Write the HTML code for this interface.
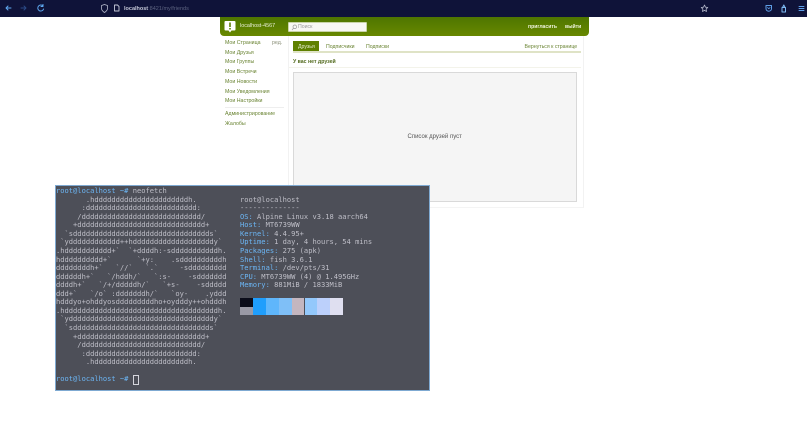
<!DOCTYPE html>
<html lang="ru">
<head>
<meta charset="utf-8">
<title>localhost</title>
<style>
html,body{margin:0;padding:0;background:#fff;width:807px;height:422px;overflow:hidden;font-family:"Liberation Sans","Noto Sans CJK SC",sans-serif}
#all{position:absolute;left:0;top:0;width:807px;height:422px;filter:blur(.35px)}
.a{position:absolute;white-space:pre;line-height:1}
#bar{position:absolute;left:0;top:0;width:807px;height:17px;background:#0f1339}
#hd{position:absolute;left:220px;top:17px;width:369px;height:19px;background:linear-gradient(#4e7600,#688800);border-radius:0 0 4px 4px}
#panel{position:absolute;left:288px;top:36px;width:294px;height:171px;background:#fff;border-right:1px solid #f2f2f2;border-left:1px solid #f2f2f2;border-bottom:1px solid #f4f4f4}
.m{position:absolute;left:225px;font-size:5.25px;color:#6a8433;line-height:1;white-space:pre}
.t{position:absolute;font-size:5.2px;color:#6a8433;line-height:1;white-space:pre}
#term{position:absolute;left:55px;top:185px;width:373px;height:204px;background:#4d4f58;border:1px solid #7faad2;box-sizing:content-box}
#term pre{position:absolute;margin:0;font-family:"DejaVu Sans Mono","Liberation Mono",monospace;font-size:7.09px;line-height:8.56px;color:#bfbfc8;white-space:pre}
.b{color:#6cb6f5}
.sw{position:absolute;width:12.9px;height:17px}
</style>
</head>
<body>
<div id="all">
<div id="bar">
<svg width="807" height="17" style="position:absolute;left:0;top:0" fill="none" stroke-linecap="round" stroke-linejoin="round">
<path d="M6 8h5M6 8l2-2M6 8l2 2" stroke="#5fa8f0" stroke-width="1"/>
<path d="M21 8h5M26 8l-2-2M26 8l-2 2" stroke="#2b4a86" stroke-width="1"/>
<path d="M43 6a3 3 0 1 0 0.6 3M43 4.500v2h-2" stroke="#5fa8f0" stroke-width="1"/>
<path d="M101.500 5.500l3-1 3 1v3c0 2-1.500 3-3 4-1.500-1-3-2-3-4z" stroke="#b5b9cc" stroke-width=".8"/>
<path d="M114.500 5h3l1.500 1.500V11h-4.500z" stroke="#c5c8d8" stroke-width=".9"/>
<path d="M704.500 5l1 2.200 2.300.3-1.700 1.600.4 2.400-2-1.200-2 1.200.4-2.400-1.700-1.600 2.300-.3z" stroke="#b5b9cc" stroke-width=".8"/>
<path d="M766 5.500h5.500v3c0 1.600-1.200 2.700-2.700 2.700s-2.800-1.100-2.800-2.700z" stroke="#5f9fe8" stroke-width="1"/>
<path d="M767.500 7.500l1.300 1.200 1.300-1.200" stroke="#5f9fe8" stroke-width=".8"/>
<path d="M782 7.500h3.500V12H782zM782.500 7.500l1.300-2.500 1.300 2.500" stroke="#7db9f2" stroke-width="1"/>
<path d="M799 6.500h5M799 8.500h5M799 10.500h5" stroke="#5f9fe8" stroke-width=".9"/>
</svg>
<div class="a" style="left:124px;top:6.500px;font-size:5.500px;color:#c3c6d6;font-weight:bold">localhost<span style="color:#5d6380;font-weight:normal">:8421/my/friends</span></div>
</div>

<div id="hd">
<svg width="13" height="15" style="position:absolute;left:4px;top:3px"><path d="M1.500 1h9a1 1 0 0 1 1 1v7.500a1 1 0 0 1-1 1H7.500L6 12.500 4.500 10.500h-3a1 1 0 0 1-1-1V2a1 1 0 0 1 1-1z" fill="#fff"/><rect x="5.200" y="2.500" width="1.600" height="4.500" fill="#5d7f05"/><rect x="5.200" y="8" width="1.600" height="1.500" fill="#5d7f05"/></svg>
<div class="a" style="left:20px;top:7.300px;font-size:5.400px;color:#e8efd8">localhost-4567</div>
<div style="position:absolute;left:68px;top:5px;width:79px;height:10px;background:#f8f8f4;border:.5px solid #c9d4a8;border-radius:1px;box-sizing:border-box"></div>
<svg width="7" height="7" style="position:absolute;left:71px;top:7px" fill="none" stroke="#999" stroke-width=".7"><circle cx="3.800" cy="2.800" r="1.800"/><path d="M2.500 4.200L1 6"/></svg>
<div class="a" style="left:78px;top:8px;font-size:5.200px;color:#9a9a9a">Поиск</div>
<div class="a" style="left:308px;top:7.500px;font-size:5.100px;font-weight:bold;color:#eef3dc">пригласить</div>
<div class="a" style="left:345px;top:7.500px;font-size:5.100px;font-weight:bold;color:#eef3dc">выйти</div>
</div>

<div class="m" style="top:41px">Мои Страница</div>
<div class="m" style="top:41px;left:272px;color:#8a8f78">ред.</div>
<div class="m" style="top:50.500px">Мои Друзья</div>
<div class="m" style="top:60px">Мои Группы</div>
<div class="m" style="top:70px">Мои Встречи</div>
<div class="m" style="top:79.500px">Мои Новости</div>
<div class="m" style="top:89.500px">Мои Уведомления</div>
<div class="m" style="top:99px">Мои Настройки</div>
<div style="position:absolute;left:225px;top:107px;width:59px;height:1px;background:#eeeeee"></div>
<div class="m" style="top:112px">Администрирование</div>
<div class="m" style="top:121.500px">Жалобы</div>

<div id="panel"></div>
<div style="position:absolute;left:293px;top:41px;width:26px;height:11px;background:#5f8000"></div>
<div class="t" style="left:298px;top:44.500px;color:#e6eed0">Друзья</div>
<div class="t" style="left:326px;top:44.500px">Подписчики</div>
<div class="t" style="left:366px;top:44.500px">Подписки</div>
<div class="t" style="left:524.500px;top:44.500px">Вернуться к странице</div>
<div style="position:absolute;left:293px;top:51px;width:288px;height:1.500px;background:#dfe3c6"></div>
<div class="t" style="left:293px;top:60.300px;font-weight:bold;color:#51691c">У вас нет друзей</div>
<div style="position:absolute;left:289px;top:67px;width:292px;height:1px;background:#f3f3ea"></div>
<div style="position:absolute;left:293px;top:72px;width:284px;height:130px;background:#f5f5f5;border:1px solid #d9d9d9;box-sizing:border-box"></div>
<div class="a" style="left:407.500px;top:133.800px;font-size:6px;color:#555">Список друзей пуст</div>

<div id="term">
<pre style="left:0;top:1px"><span class="b">root@localhost ~#</span> neofetch
       .hddddddddddddddddddddddh.
      :dddddddddddddddddddddddddd:
     /dddddddddddddddddddddddddddd/
    +dddddddddddddddddddddddddddddd+
  `sdddddddddddddddddddddddddddddddds`
 `ydddddddddddd++hdddddddddddddddddddy`
.hddddddddddd+`  `+ddddh:-sdddddddddddh.
hdddddddddd+`      `+y:    .sddddddddddh
ddddddddh+`   `//`   `.`     -sddddddddd
ddddddh+`   `/hddh/`   `:s-    -sddddddd
ddddh+`   `/+/dddddh/`   `+s-    -sddddd
ddd+`   `/o` :dddddddh/`   `oy-    .yddd
hdddyo+ohddyosdddddddddho+oydddy++ohdddh
.hddddddddddddddddddddddddddddddddddddh.
 `yddddddddddddddddddddddddddddddddddy`
  `sdddddddddddddddddddddddddddddddds`
    +dddddddddddddddddddddddddddddd+
     /dddddddddddddddddddddddddddd/
      :dddddddddddddddddddddddddd:
       .hddddddddddddddddddddddh.

<span class="b">root@localhost ~#</span></pre>
<pre style="left:184px;top:9.600px">root@localhost
--------------
<span class="b">OS:</span> Alpine Linux v3.18 aarch64
<span class="b">Host:</span> MT6739WW
<span class="b">Kernel:</span> 4.4.95+
<span class="b">Uptime:</span> 1 day, 4 hours, 54 mins
<span class="b">Packages:</span> 275 (apk)
<span class="b">Shell:</span> fish 3.6.1
<span class="b">Terminal:</span> /dev/pts/31
<span class="b">CPU:</span> MT6739WW (4) @ 1.495GHz
<span class="b">Memory:</span> 881MiB / 1833MiB</pre>
<div style="position:absolute;left:77px;top:189px;width:3.500px;height:8px;border:1px solid #d5d5dc"></div>
<div class="sw" style="left:184px;top:112px;height:8.500px;background:#0b0d1a"></div>
<div class="sw" style="left:184px;top:120.500px;height:8.500px;background:#9a9aa6"></div>
<div class="sw" style="left:196.900px;top:112px;background:#1f9efc"></div>
<div class="sw" style="left:209.800px;top:112px;background:#5fb6fb"></div>
<div class="sw" style="left:222.700px;top:112px;background:#7fbff7"></div>
<div class="sw" style="left:235.600px;top:112px;background:#c4b6bf"></div>
<div class="sw" style="left:248.500px;top:112px;background:#93c8fb"></div>
<div class="sw" style="left:261.400px;top:112px;background:#bcd0fb"></div>
<div class="sw" style="left:274.300px;top:112px;background:#dfdff0"></div>
</div>
</div>
</body>
</html>
